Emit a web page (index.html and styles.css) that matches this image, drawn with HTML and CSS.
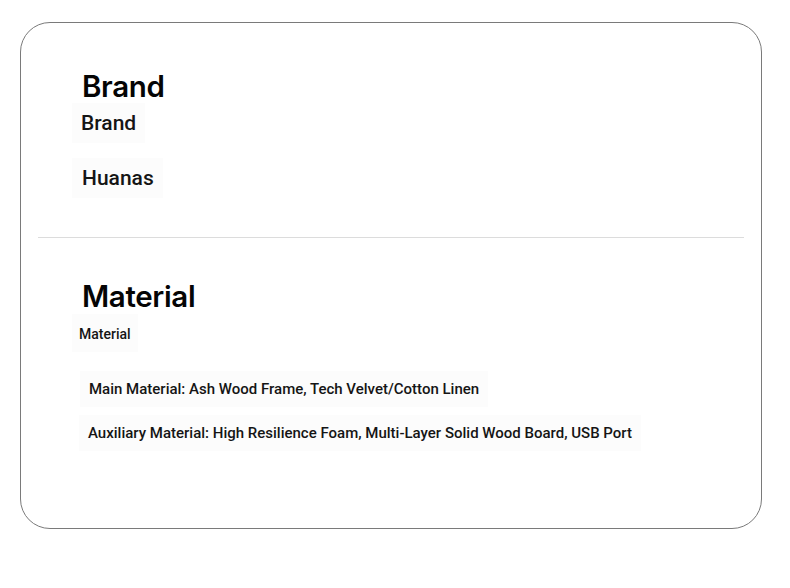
FILE: index.html
```html
<!DOCTYPE html>
<html lang="en">
<head>
<meta charset="utf-8">
<title>Product Attributes</title>
<link rel="stylesheet" href="styles.css">
</head>
<body>
  <div class="card">
    <section class="group group-brand">
      <h2 class="title">Brand</h2>
      <div class="chip chip-label chip-brand">Brand</div>
      <div class="chip chip-value">Huanas</div>
    </section>
    <hr class="divider">
    <section class="group group-material">
      <h2 class="title">Material</h2>
      <div class="chip chip-small">Material</div>
      <div class="chip chip-line chip-main">Main Material: Ash Wood Frame, Tech Velvet/Cotton Linen</div>
      <div class="chip chip-line chip-aux">Auxiliary Material: High Resilience Foam, Multi-Layer Solid Wood Board, USB Port</div>
    </section>
  </div>
</body>
</html>
```

FILE: styles.css
```css
* {
  box-sizing: border-box;
}

html, body {
  margin: 0;
  padding: 0;
  background: #ffffff;
}

body {
  padding: 22px 0 0 20px;
  font-family: Roboto, "Liberation Sans", sans-serif;
  color: #111111;
}

.card {
  width: 742px;
  height: 507px;
  border: 1px solid #7a7a7a;
  border-radius: 30px;
  padding: 0 17px;
  background: #ffffff;
}

.group {
  display: flex;
  flex-direction: column;
  align-items: flex-start;
}

.group-brand {
  padding-top: 45px;
  height: 214px;
}

.group-material {
  padding-top: 40px;
}

.title {
  margin: 0 0 0 44px;
  font-family: Inter, "Noto Sans", sans-serif;
  font-weight: 600;
  font-size: 29.5px;
  line-height: 36px;
  color: #050505;
  letter-spacing: -0.35px;
}

.chip {
  background: #fcfcfc;
  font-weight: 500;
  color: #151515;
}

.chip-label {
  margin: -1px 0 0 34px;
  padding: 8px 9px;
  font-size: 21px;
  line-height: 24px;
}

.chip-value {
  margin: 15px 0 0 34px;
  padding: 8px 9px 8px 10px;
  font-size: 21px;
  line-height: 24px;
}

.divider {
  margin: 0;
  border: 0;
  border-top: 1px solid #dcdcdc;
}

.chip-small {
  margin: 0 0 0 34px;
  padding: 10px 7px 8px;
  font-size: 14px;
  line-height: 20px;
}

.chip-line {
  padding: 8px 9px;
  font-size: 15px;
  line-height: 20px;
}

.chip-main {
  margin: 19px 0 0 42px;
}

.chip-aux {
  margin: 8px 0 0 41px;
}
```
